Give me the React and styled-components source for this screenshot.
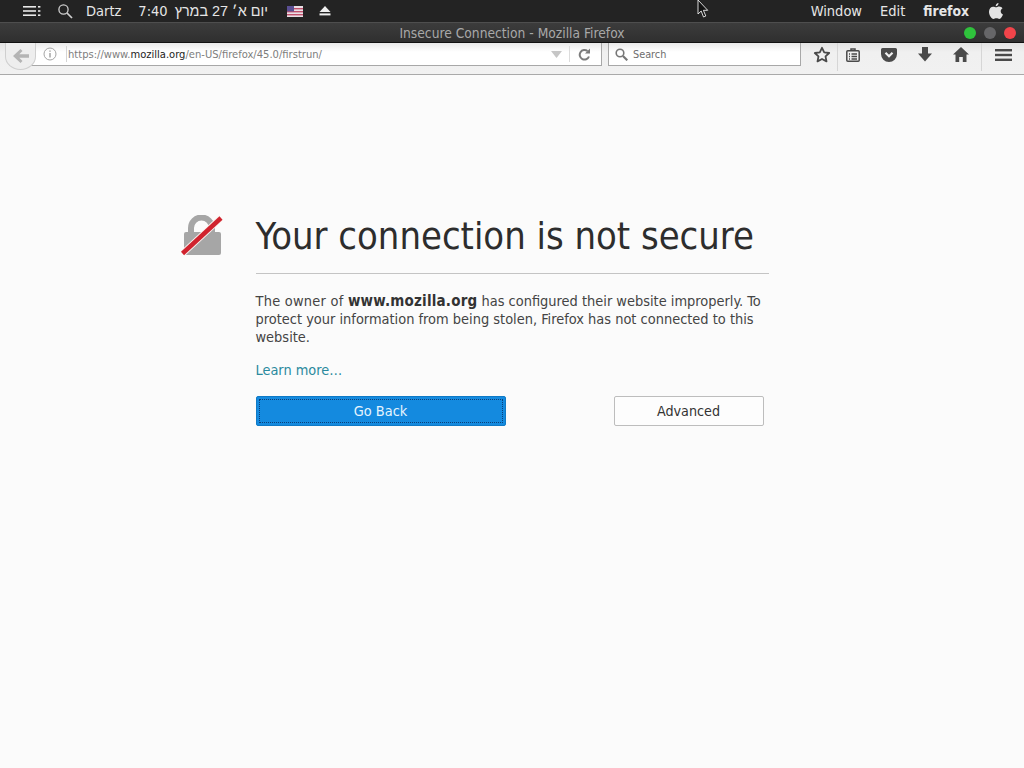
import React from "react";
import styled, { createGlobalStyle } from "styled-components";

const Global = createGlobalStyle`
  html, body { margin: 0; padding: 0; background: #fbfbfb; }
  body { font-family: "DejaVu Sans", sans-serif; overflow: hidden; }
`;

const Page = styled.div`
  position: relative;
  width: 1024px;
  height: 768px;
  overflow: hidden;
  display: flex;
  flex-direction: column;
`;

// top desktop menu bar
const MenuBar = styled.div`
  height: 22px;
  background: #232323;
  display: flex;
  align-items: center;
  justify-content: space-between;
  color: #e6e6e6;
`;
const MenuGroup = styled.div`
  display: flex;
  align-items: center;
  padding: ${(p) => p.$pad || "0"};
`;
const MenuText = styled.span`
  font-family: ${(p) => (p.$hebrew ? '"Liberation Sans", sans-serif' : '"DejaVu Sans Condensed", "DejaVu Sans", sans-serif')};
  font-size: ${(p) => p.$size || 14.5}px;
  font-weight: ${(p) => (p.$bold ? 700 : 400)};
  margin-left: ${(p) => p.$ml || 0}px;
  white-space: nowrap;
`;
const Icon = styled.svg`
  display: block;
  flex: none;
  margin-left: ${(p) => p.$ml || 0}px;
`;

const TitleBar = styled.div`
  position: relative;
  height: 21px;
  padding-top: 1px;
  background: linear-gradient(#3c3c3c, #2f2f2f);
  border-top: 1px solid #4e4e4e;
  border-bottom: 1px solid #111;
  box-sizing: border-box;
  display: flex;
  align-items: center;
  justify-content: center;
  color: #a8a8a8;
  font-family: "DejaVu Sans Condensed", "DejaVu Sans", sans-serif;
  font-size: 13.7px;
`;
const WindowDots = styled.div`
  position: absolute;
  right: 8px;
  top: 4px;
  display: flex;
  gap: 8px;
`;
const Dot = styled.span`
  width: 12px;
  height: 12px;
  border-radius: 50%;
  background: ${(p) => p.$color};
`;

const Toolbar = styled.div`
  height: 32px;
  box-sizing: border-box;
  background: linear-gradient(#e2e2e2, #f0f0f0 30%, #f1f1f1);
  border-bottom: 1px solid #a9a9a9;
  display: flex;
  align-items: flex-start;
  position: relative;
  color: #4a4a4a;
`;
const BackCircle = styled.div`
  position: absolute;
  left: 5px;
  top: 0;
  width: 31px;
  height: 27px;
  border-radius: 0 0 50% 50%;
  background: #eeeeee;
  border: 1px solid #cfcfcf;
  border-top: none;
  box-sizing: border-box;
  display: flex;
  align-items: center;
  justify-content: center;
`;
const UrlBar = styled.div`
  margin-left: 22px;
  width: 580px;
  height: 23px;
  box-sizing: border-box;
  background: linear-gradient(#e9e9e9, #ffffff 40%);
  border: 1px solid #a8a8a8;
  border-top: none;
  display: flex;
  align-items: center;
  padding-left: 20px;
`;
const InfoSlot = styled.div`
  width: 23px;
  height: 16px;
  display: flex;
  align-items: center;
  border-right: 1px solid #d4d4d4;
  margin-right: 1px;
  flex: none;
`;
const UrlText = styled.span`
  flex: 1;
  padding-top: 1px;
  font-family: "DejaVu Sans Condensed", "DejaVu Sans", sans-serif;
  font-size: 11.1px;
  color: #7d7d7d;
  white-space: nowrap;
  b { font-weight: 400; color: #1c1c1c; }
`;
const UrlEnd = styled.div`
  width: 32px;
  height: 16px;
  display: flex;
  align-items: center;
  justify-content: center;
  border-left: 1px solid #dcdcdc;
  margin-left: 7px;
  padding-right: 2px;
  box-sizing: border-box;
  flex: none;
`;
const SearchBar = styled.div`
  margin-left: 6px;
  width: 193px;
  height: 23px;
  box-sizing: border-box;
  background: linear-gradient(#e9e9e9, #ffffff 40%);
  border: 1px solid #a8a8a8;
  border-top: none;
  display: flex;
  align-items: center;
  gap: 5px;
  padding-left: 6px;
  font-family: "DejaVu Sans Condensed", "DejaVu Sans", sans-serif;
  font-size: 10.8px;
  color: #6d6d6d;
`;
const SearchLabel = styled.span`
  padding-top: 1px;
`;
const ToolIcons = styled.div`
  display: flex;
  align-items: center;
  height: 23px;
  margin-left: 12px;
`;
const ToolDivider = styled.div`
  width: 1px;
  height: 28px;
  background: #d6d6d6;
  margin-left: ${(p) => p.$ml}px;
  align-self: flex-start;
`;

const Content = styled.main`
  flex: 1;
  background: #fbfbfb;
  display: flex;
  justify-content: center;
  padding: 139px 0 0 0;
  color: #2f2f2f;
`;
const Frame = styled.div`
  display: flex;
  align-items: flex-start;
  margin-left: -74px;
`;
const LockBox = styled.div`
  width: 74px;
  padding-top: 1px;
  flex: none;
`;
const Body = styled.div`
  width: 513px;
`;
const Title = styled.h1`
  margin: 0;
  font-family: "DejaVu Sans Condensed", "DejaVu Sans", sans-serif;
  font-size: 37.8px;
  line-height: 44px;
  font-weight: 400;
  color: #2d2d2d;
  padding-bottom: 15px;
  border-bottom: 1px solid #c4c4c4;
  white-space: nowrap;
`;
const Text = styled.p`
  margin: 18px 0 0 0;
  font-family: "DejaVu Sans Condensed", "DejaVu Sans", sans-serif;
  font-size: 14.45px;
  line-height: 18px;
  color: #444;
  b { font-weight: 700; font-size: 15px; letter-spacing: .2px; color: #333; }
`;
const Owner = styled.span`
  letter-spacing: .25px;
`;
const LearnMore = styled.a`
  display: block;
  margin-top: 15px;
  font-family: "DejaVu Sans Condensed", "DejaVu Sans", sans-serif;
  font-size: 14.4px;
  line-height: 18px;
  color: #2b8a9e;
`;
const Buttons = styled.div`
  display: flex;
  justify-content: space-between;
  width: 508px;
  margin-top: 17px;
`;
const GoBack = styled.button`
  width: 250px;
  height: 30px;
  padding: 0;
  box-sizing: border-box;
  background: #148adf;
  color: #e6f4fd;
  border: 1px solid #0f7ac6;
  border-radius: 2px;
  outline: 1px dotted #0a3f78;
  outline-offset: -4px;
  font-family: "DejaVu Sans Condensed", "DejaVu Sans", sans-serif;
  font-size: 14.4px;
`;
const Advanced = styled.button`
  width: 150px;
  height: 30px;
  padding: 0;
  box-sizing: border-box;
  background: #fdfdfd;
  color: #333;
  border: 1px solid #bdbdbd;
  border-radius: 2px;
  font-family: "DejaVu Sans Condensed", "DejaVu Sans", sans-serif;
  font-size: 14.2px;
`;
const Cursor = styled.svg`
  position: absolute;
  left: 697px;
  top: 0;
`;

const GRAY = "#4a4a4a";

export default function App() {
  return (
    <Page>
      <Global />
      <MenuBar>
        <MenuGroup $pad="0 0 0 23px">
          <Icon width="19" height="12" viewBox="0 0 19 12" fill="#e8e8e8">
            <rect x="0" y="1" width="13" height="1.6" />
            <rect x="0" y="5.2" width="13" height="1.6" />
            <rect x="0" y="9.4" width="13" height="1.6" />
            <rect x="15" y="1" width="2.4" height="1.6" />
            <rect x="15" y="5.2" width="2.4" height="1.6" />
            <rect x="15" y="9.4" width="2.4" height="1.6" />
          </Icon>
          <Icon $ml={15} width="16" height="16" viewBox="0 0 16 16" fill="none" stroke="#cfcfcf" strokeWidth="1.3">
            <circle cx="6.5" cy="6.5" r="4.6" />
            <path d="M10 10l5 5" strokeWidth="1.7" />
          </Icon>
          <MenuText $ml={13}>Dartz</MenuText>
          <MenuText $ml={17}>7:40</MenuText>
          <MenuText $ml={7} $size={14.4} $hebrew dir="rtl">יום א׳ 27 במרץ</MenuText>
          <Icon $ml={19} width="16" height="11" viewBox="0 0 16 11">
            <rect width="16" height="11" fill="#e9dfe6" />
            <rect y="2" width="16" height="1.4" fill="#c0506c" />
            <rect y="5" width="16" height="1.4" fill="#c0506c" />
            <rect y="8" width="16" height="1.4" fill="#c0506c" />
            <rect width="7" height="5.4" fill="#5a4f93" />
          </Icon>
          <Icon $ml={16} width="12" height="10" viewBox="0 0 12 10" fill="#eeeeee">
            <path d="M6 0l5.500 6H.5z" />
            <rect x=".5" y="7.4" width="11" height="2" />
          </Icon>
        </MenuGroup>
        <MenuGroup $pad="0 21px 0 0">
          <MenuText>Window</MenuText>
          <MenuText $ml={18}>Edit</MenuText>
          <MenuText $ml={18} $size={13.8} $bold>firefox</MenuText>
          <Icon $ml={20} width="14" height="16" viewBox="0 0 14 16" fill="#e4e4e4">
            <path d="M9.500 0c.1 1.700-1.200 3.300-2.800 3.300C6.500 1.700 8 .2 9.500 0zM7 4.300c.8 0 1.800-.8 3.200-.8 1.300 0 2.600.7 3.300 1.800-2.600 1.600-2.200 5 .5 6.200-.6 1.500-2 4.400-3.700 4.400-1 0-1.500-.7-2.900-.7s-1.900.7-2.900.7C2.400 15.900 0 12 0 8.800 0 5.600 2.100 3.700 4.100 3.700c1.300 0 2.200.6 2.900.6z" />
          </Icon>
        </MenuGroup>
      </MenuBar>

      <TitleBar>
        Insecure Connection - Mozilla Firefox
        <WindowDots>
          <Dot $color="#2fc23c" />
          <Dot $color="#666668" />
          <Dot $color="#f1444a" />
        </WindowDots>
      </TitleBar>

      <Toolbar>
        <BackCircle>
          <Icon width="16" height="14" viewBox="0 0 16 14" fill="#b4b4b4">
            <path d="M7.500 0l2 2-3.200 3.200H16v3.600H6.300L9.500 12l-2 2L0 7z" />
          </Icon>
        </BackCircle>
        <UrlBar>
          <InfoSlot>
            <Icon width="14" height="14" viewBox="0 0 14 14" fill="none" stroke="#a5a5a5">
              <circle cx="7" cy="7" r="6" />
              <path d="M7 6v4.500M7 3.400v1.300" strokeWidth="1.5" />
            </Icon>
          </InfoSlot>
          <UrlText>https://www.<b>mozilla.org</b>/en-US/firefox/45.0/firstrun/</UrlText>
          <Icon width="11" height="7" viewBox="0 0 11 7" fill="#c6c6c6">
            <path d="M0 0h11L5.500 7z" />
          </Icon>
          <UrlEnd>
            <Icon width="13" height="13" viewBox="0 0 13 13" fill="none" stroke="#7c7c7c" strokeWidth="2">
              <path d="M11 8.500A4.800 4.800 0 1 1 9.500 3" />
              <path d="M12 .5v5H7z" fill="#7c7c7c" stroke="none" />
            </Icon>
          </UrlEnd>
        </UrlBar>
        <SearchBar>
          <Icon width="13" height="13" viewBox="0 0 13 13" fill="none" stroke="#777" strokeWidth="1.6">
            <circle cx="5" cy="5" r="3.800" />
            <path d="M8 8l4.300 4.300" strokeWidth="2.200" />
          </Icon>
          <SearchLabel>Search</SearchLabel>
        </SearchBar>
        <ToolIcons>
          <Icon width="18" height="17" viewBox="0 0 18 17" fill="none" stroke={GRAY} strokeWidth="1.800">
            <path d="M9 1.800l2.200 4.600 5 .6-3.700 3.400 1 5L9 13l-4.500 2.400 1-5L1.800 7l5-.6z" strokeLinejoin="round" />
          </Icon>
          <ToolDivider $ml={6} />
          <Icon $ml={8} width="14" height="14" viewBox="0 0 14 14" fill="none" stroke={GRAY} strokeWidth="1.500">
            <rect x=".8" y="2.800" width="12.400" height="10.400" rx="1" />
            <path d="M5 2.800V1h4v1.800M3 6h1M3 8.500h1M3 11h1M5.500 6H11M5.500 8.500H11M5.500 11H11" />
          </Icon>
          <Icon $ml={21} width="16" height="14" viewBox="0 0 16 14">
            <path d="M1.500 0h13A1.500 1.500 0 0 1 16 1.500V6a8 8 0 0 1-16 0V1.500A1.500 1.500 0 0 1 1.500 0z" fill={GRAY} />
            <path d="M4.500 4.800L8 8.200l3.500-3.400" fill="none" stroke="#f0f0f0" strokeWidth="2.200" />
          </Icon>
          <Icon $ml={21} width="14" height="15" viewBox="0 0 14 15" fill={GRAY}>
            <path d="M4 0h6v6.500h4L7 14.500 0 6.500h4z" />
          </Icon>
          <Icon $ml={21} width="16" height="15" viewBox="0 0 16 15" fill={GRAY}>
            <path d="M8 0l8 7.500h-2.500V15H9.800v-5H6.200v5H2.500V7.500H0z" />
          </Icon>
          <ToolDivider $ml={12} />
          <Icon $ml={13} width="17" height="12" viewBox="0 0 17 12" fill={GRAY}>
            <rect width="17" height="2.400" />
            <rect y="4.800" width="17" height="2.400" />
            <rect y="9.600" width="17" height="2.400" />
          </Icon>
        </ToolIcons>
      </Toolbar>

      <Content>
        <Frame>
          <LockBox>
            <Icon $ml={-1} width="42" height="42" viewBox="0 0 42 42">
              <path d="M10 19v-6a10.500 10.500 0 0 1 21 0v6" fill="none" stroke="#a6a6a6" strokeWidth="6" />
              <rect x="3" y="17" width="37" height="23" rx="2" fill="#a6a6a6" />
              <path d="M1.500 38.500L40 3" stroke="#fbf3f0" strokeWidth="6.500" />
              <path d="M1.500 38.500L40 3" stroke="#d0232e" strokeWidth="4.500" />
            </Icon>
          </LockBox>
          <Body>
            <Title>Your connection is not secure</Title>
            <Text>
              <Owner>The owner of </Owner><b>www.mozilla.org</b> has configured their website improperly. To protect your information from being stolen, Firefox has not connected to this website.
            </Text>
            <LearnMore>Learn more…</LearnMore>
            <Buttons>
              <GoBack>Go Back</GoBack>
              <Advanced>Advanced</Advanced>
            </Buttons>
          </Body>
        </Frame>
      </Content>

      <Cursor width="12" height="19" viewBox="0 0 12 19">
        <path d="M1 0v14l3.200-3 2.300 6 2.300-1-2.400-5.700h4.300z" fill="#111" stroke="#eee" strokeWidth=".9" />
      </Cursor>
    </Page>
  );
}
